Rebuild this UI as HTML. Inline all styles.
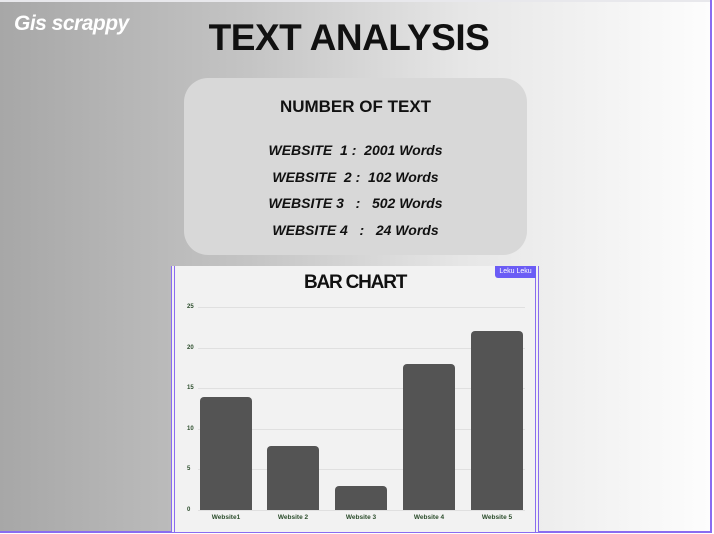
<!DOCTYPE html>
<html><head><style>
body{margin:0;width:714px;height:534px;overflow:hidden;font-family:"Liberation Sans",sans-serif;}
.bg{position:absolute;left:0;top:0;width:710px;height:531px;background:linear-gradient(90deg,#a7a7a7 0%,#c4c4c4 35%,#e6e6e6 65%,#fdfdfd 100%);border-top:2px solid #e8e8ec;}
.rline{position:absolute;left:710px;top:0;width:2px;height:532px;background:#8a6cf0;}
.bline{position:absolute;left:0;top:531px;width:712px;height:2px;background:#8a6cf0;}
.logo{position:absolute;left:14px;top:12px;color:#fff;font-weight:bold;font-style:italic;font-size:21px;letter-spacing:-0.5px;}
.title{position:absolute;left:0;width:698px;top:17px;text-align:center;font-weight:bold;font-size:37px;color:#111;letter-spacing:-0.5px;}
.box{position:absolute;left:184px;top:78px;width:343px;height:177px;background:#d8d8d8;border-radius:24px;text-align:center;}
.box h2{margin:19px 0 20px;font-size:17px;font-weight:bold;color:#111;}
.box p{margin:0;font-size:14px;font-weight:bold;font-style:italic;line-height:26.5px;color:#111;}
.chart{position:absolute;left:171px;top:266px;width:368px;height:266px;background:#f2f2f2;border-left:4px double #8a6cf0;border-right:4px double #8a6cf0;box-sizing:border-box;}
.badge{position:absolute;left:495px;top:266px;width:41px;height:12px;background:#6b5cf5;color:#fff;font-size:7px;text-align:center;line-height:12px;border-radius:0 0 0 3px;}
.ct{position:absolute;left:304px;top:272px;font-weight:bold;font-size:19px;letter-spacing:-1.2px;color:#111;}
.g{position:absolute;left:198px;width:327px;height:1px;background:#e0e0e0;}
.yl{position:absolute;left:187px;font-size:6px;font-weight:bold;color:#2c4d2c;}
.bar{position:absolute;width:52px;background:#545454;border-radius:4px 4px 0 0;bottom:24px;}
.xl{position:absolute;top:514px;font-size:6.5px;font-weight:bold;color:#2c4d2c;width:60px;text-align:center;}
</style></head><body>
<div class="bg"></div><div class="rline"></div><div class="bline"></div>
<div class="logo">Gis scrappy</div>
<div class="title">TEXT ANALYSIS</div>
<div class="box"><h2>NUMBER OF TEXT</h2>
<p>WEBSITE&nbsp; 1 :&nbsp; 2001 Words</p>
<p>WEBSITE&nbsp; 2 :&nbsp; 102 Words</p>
<p>WEBSITE 3 &nbsp; : &nbsp; 502 Words</p>
<p>WEBSITE 4 &nbsp; : &nbsp; 24 Words</p></div>
<div class="chart"></div>
<div class="badge">Leku Leku</div>
<div class="ct">BAR CHART</div>
<div class="g" style="top:307px"></div><div class="g" style="top:348px"></div><div class="g" style="top:388px"></div><div class="g" style="top:429px"></div><div class="g" style="top:469px"></div><div class="g" style="top:510px"></div>
<div class="yl" style="top:304px">25</div><div class="yl" style="top:345px">20</div><div class="yl" style="top:385px">15</div><div class="yl" style="top:426px">10</div><div class="yl" style="top:466px">5</div><div class="yl" style="top:507px">0</div>
<div class="bar" style="left:200px;height:113px"></div>
<div class="bar" style="left:267px;height:64px"></div>
<div class="bar" style="left:335px;height:24px"></div>
<div class="bar" style="left:403px;height:146px"></div>
<div class="bar" style="left:471px;height:179px"></div>
<div class="xl" style="left:196px">Website1</div>
<div class="xl" style="left:263px">Website 2</div>
<div class="xl" style="left:331px">Website 3</div>
<div class="xl" style="left:399px">Website 4</div>
<div class="xl" style="left:467px">Website 5</div>
</body></html>
